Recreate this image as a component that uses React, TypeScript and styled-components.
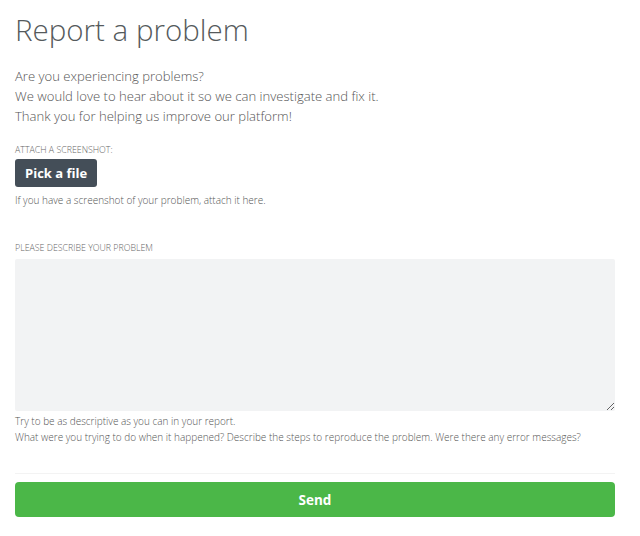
import styled, { createGlobalStyle } from 'styled-components';

const GlobalStyle = createGlobalStyle`
  html, body { margin: 0; padding: 0; background: #fff; }
  body { font-family: "Open Sans", "DejaVu Sans", sans-serif; color: #555; }
  * { box-sizing: border-box; }
`

const Page = styled.div`
  width: 630px;
  padding: 10px 15px 20px 15px;
  display: flex;
  flex-direction: column;
`

const Title = styled.h1`
  margin: 0;
  font-size: 29.5px;
  font-weight: 300;
  line-height: 40px;
  color: #555a5c;
`

const Intro = styled.p`
  margin: 16px 0 0;
  font-size: 13.1px;
  font-weight: 300;
  line-height: 20px;
  color: #555;
`

const Label = styled.div<{ top: number }>`
  margin-top: ${p => p.top}px;
  font-size: 8.8px;
  font-weight: 300;
  text-transform: uppercase;
  color: #666;
  line-height: 12px;
`

const FileButton = styled.button`
  margin-top: 3px;
  align-self: flex-start;
  height: 28px;
  padding: 0 10px;
  border: none;
  border-radius: 3px;
  background: #444e58;
  color: #fff;
  font-family: "Open Sans", sans-serif;
  font-weight: 700;
  font-size: 13px;
  cursor: pointer;
`

const Hint = styled.div<{ top: number }>`
  margin-top: ${p => p.top}px;
  font-size: 10px;
  font-weight: 300;
  line-height: 16px;
  color: #555;
`

const Description = styled.textarea`
  margin-top: 5px;
  width: 600px;
  height: 152px;
  border: none;
  border-radius: 2px;
  background: #f2f3f4;
  resize: vertical;
  font-family: inherit;
  padding: 8px;
  display: block;
`

const Divider = styled.div`
  margin-top: 28px;
  height: 1px;
  background: #f3f3f3;
`

const SendButton = styled.button`
  margin-top: 8px;
  width: 600px;
  height: 35px;
  border: none;
  border-radius: 4px;
  background: #4bb748;
  color: #fff;
  font-family: "Open Sans", sans-serif;
  font-weight: 700;
  font-size: 13.5px;
  cursor: pointer;
`

export default function App() {
    return <>
        <GlobalStyle/>
        <Page>
            <Title>Report a problem</Title>
            <Intro>
                Are you experiencing problems?<br/>
                We would love to hear about it so we can investigate and fix it.<br/>
                Thank you for helping us improve our platform!
            </Intro>
            <Label top={18}>Attach a screenshot:</Label>
            <FileButton>Pick a file</FileButton>
            <Hint top={5}>If you have a screenshot of your problem, attach it here.</Hint>
            <Label top={34}>Please describe your problem</Label>
            <Description/>
            <Hint top={2}>
                Try to be as descriptive as you can in your report.<br/>
                What were you trying to do when it happened? Describe the steps to reproduce the problem. Were there any error messages?
            </Hint>
            <Divider/>
            <SendButton>Send</SendButton>
        </Page>
    </>
}
